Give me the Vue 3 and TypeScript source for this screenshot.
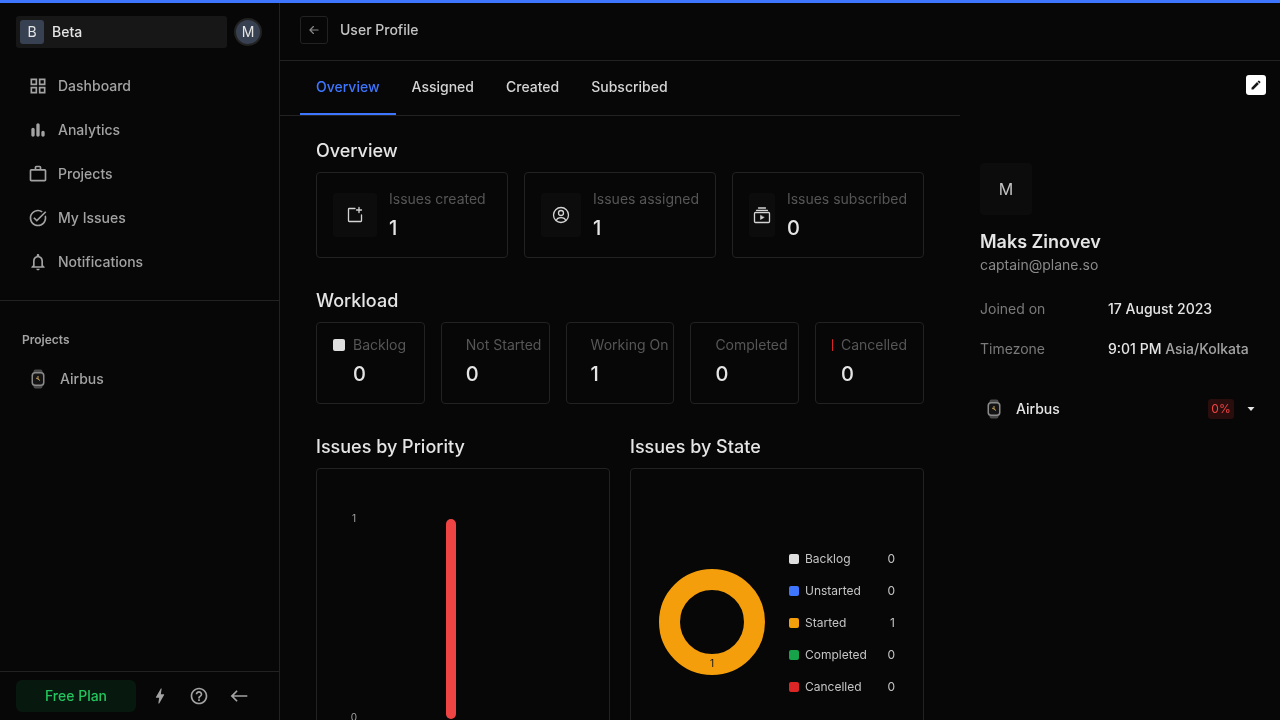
<script setup lang="ts">
const nav = [
  { label: 'Dashboard', d: 'M3 3v8h8V3H3zm6 6H5V5h4v4zm-6 4v8h8v-8H3zm6 6H5v-4h4v4zm4-16v8h8V3h-8zm6 6h-4V5h4v4zm-6 4v8h8v-8h-8zm6 6h-4v-4h4v4z' },
  { label: 'Analytics', d: 'M6 9.2c1.1 0 2 .9 2 2V18c0 1.1-.9 2-2 2s-2-.9-2-2v-6.8c0-1.1.9-2 2-2zM12 4c1.1 0 2 .9 2 2v12c0 1.1-.9 2-2 2s-2-.9-2-2V6c0-1.100.9-2 2-2zm6 9c1.1 0 2 .9 2 2v3c0 1.1-.9 2-2 2s-2-.9-2-2v-3c0-1.100.9-2 2-2z' },
  { label: 'Projects', d: 'M14 6V4h-4v2h4zM4 8v11h16V8H4zm16-2c1.110 0 2 .89 2 2v11c0 1.110-.89 2-2 2H4c-1.110 0-2-.89-2-2l.01-11c0-1.110.88-2 1.990-2h4V4c0-1.110.89-2 2-2h4c1.110 0 2 .89 2 2v2h4z' },
  { label: 'My Issues', d: 'M22 5.180 10.590 16.600l-4.240-4.240 1.410-1.410 2.830 2.830 10-10L22 5.180zm-2.210 5.040c.13.57.21 1.170.21 1.780 0 4.420-3.580 8-8 8s-8-3.580-8-8 3.580-8 8-8c1.580 0 3.040.46 4.280 1.250l1.440-1.440A9.900 9.900 0 0 0 12 2C6.480 2 2 6.480 2 12s4.480 10 10 10 10-4.480 10-10c0-1.190-.22-2.330-.6-3.390l-1.610 1.610z' },
  { label: 'Notifications', d: 'M12 22c1.100 0 2-.9 2-2h-4c0 1.100.9 2 2 2zm6-6v-5c0-3.070-1.630-5.640-4.500-6.320V4c0-.83-.67-1.500-1.500-1.500s-1.500.67-1.500 1.500v.68C7.640 5.360 6 7.920 6 11v5l-2 2v1h16v-1l-2-2zm-2 1H8v-6c0-2.480 1.510-4.500 4-4.500s4 2.020 4 4.500v6z' }
]

const tabs = ['Overview', 'Assigned', 'Created', 'Subscribed']

const overview = [
  { label: 'Issues created', value: 1, icon: 'created' },
  { label: 'Issues assigned', value: 1, icon: 'assigned' },
  { label: 'Issues subscribed', value: 0, icon: 'subscribed' }
]

const workload = [
  { label: 'Backlog', value: 0, color: '#dedede' },
  { label: 'Not Started', value: 0, color: '#3f76ff' },
  { label: 'Working On', value: 1, color: '#f59e0b' },
  { label: 'Completed', value: 0, color: '#16a34a' },
  { label: 'Cancelled', value: 0, color: '#dc2626' }
]

const legend = [
  { label: 'Backlog', value: 0, color: '#dedede' },
  { label: 'Unstarted', value: 0, color: '#3f76ff' },
  { label: 'Started', value: 1, color: '#f59e0b' },
  { label: 'Completed', value: 0, color: '#16a34a' },
  { label: 'Cancelled', value: 0, color: '#dc2626' }
]
</script>

<template>
  <div class="page">
    <div class="topbar"></div>
    <div class="shell">
      <aside class="sidebar">
        <div class="side-head">
          <div class="workspace">
            <span class="ws-logo">B</span>
            <span class="ws-name">Beta</span>
          </div>
          <span class="user-dot">M</span>
        </div>
        <nav class="nav">
          <div v-for="item in nav" :key="item.label" class="nav-item">
            <svg class="nav-icon" viewBox="0 0 24 24" width="20" height="20"><path :d="item.d" /></svg>
            <span>{{ item.label }}</span>
          </div>
        </nav>
        <div class="side-projects">
          <div class="side-label">Projects</div>
          <div class="side-project">
            <svg class="watch" viewBox="0 0 16 20" width="16" height="20">
              <rect x="3.500" y="0.500" width="9" height="19" rx="2" fill="#4a4a4a" />
              <rect x="1.500" y="3" width="13" height="14" rx="3.500" fill="#8a8a8a" />
              <rect x="3" y="4.500" width="10" height="11" rx="2.200" fill="#141414" />
              <path d="M8 7v3l2 1.500M8 10l-2-1" stroke="#c9a25a" stroke-width="1" fill="none" />
            </svg>
            <span>Airbus</span>
          </div>
        </div>
        <div class="side-foot">
          <div class="plan">Free Plan</div>
          <svg class="foot-icon bolt" viewBox="0 0 24 24" width="20" height="20"><path d="M11 21h-1l1-7H7.500c-.58 0-.57-.32-.38-.66.19-.34.05-.08.07-.12C8.480 10.940 10.420 7.540 13 3h1l-1 7h3.500c.49 0 .56.33.47.51l-.07.15C12.960 17.550 11 21 11 21z" /></svg>
          <svg class="foot-icon help" viewBox="0 0 24 24" width="20" height="20"><path d="M11 18h2v-2h-2v2zm1-16C6.480 2 2 6.480 2 12s4.480 10 10 10 10-4.480 10-10S17.520 2 12 2zm0 18c-4.410 0-8-3.590-8-8s3.590-8 8-8 8 3.590 8 8-3.590 8-8 8zm0-14c-2.210 0-4 1.790-4 4h2c0-1.100.9-2 2-2s2 .9 2 2c0 2-3 1.750-3 5h2c0-2.250 3-2.500 3-5 0-2.210-1.790-4-4-4z" /></svg>
          <svg class="foot-icon back" viewBox="0 0 24 24" width="20" height="20"><path d="M9 19l1.410-1.410L5.830 13H22v-2H5.830l4.590-4.590L9 5l-7 7 7 7z" /></svg>
        </div>
      </aside>

      <main class="main">
        <header class="header">
          <button class="back-btn">
            <svg viewBox="0 0 24 24" width="14" height="14" fill="none" stroke="#8a8a8a" stroke-width="2" stroke-linecap="round" stroke-linejoin="round"><path d="M19 12H5M11 6l-6 6 6 6" /></svg>
          </button>
          <span class="header-title">User Profile</span>
        </header>

        <div class="body">
          <div class="left">
            <div class="tabs">
              <div v-for="(t, i) in tabs" :key="t" class="tab" :class="{ active: i === 0 }">{{ t }}</div>
            </div>
            <div class="content">
              <h2 class="title">Overview</h2>
              <div class="overview-grid">
                <div v-for="c in overview" :key="c.label" class="card ov-card">
                  <div class="ov-icon">
                    <svg v-if="c.icon === 'created'" viewBox="0 0 20 20" width="20" height="20" fill="none" stroke="#d4d4d4" stroke-width="1.300" stroke-linecap="round" stroke-linejoin="round">
                      <path d="M10 3.500H4.200a.7.7 0 0 0-.7.7v11.600a.7.7 0 0 0 .7.7h11.600a.7.7 0 0 0 .7-.7V10" />
                      <path d="M14 2.500v5M11.500 5h5" />
                    </svg>
                    <svg v-else-if="c.icon === 'assigned'" viewBox="0 0 20 20" width="20" height="20" fill="none" stroke="#d4d4d4" stroke-width="1.300" stroke-linecap="round" stroke-linejoin="round">
                      <circle cx="10" cy="10" r="7.500" />
                      <circle cx="10" cy="8" r="2.500" />
                      <path d="M5.200 15.600c.6-2 2.600-3 4.800-3s4.200 1 4.800 3" />
                    </svg>
                    <svg v-else viewBox="0 0 20 20" width="20" height="20" fill="none" stroke="#d4d4d4" stroke-width="1.300" stroke-linecap="round" stroke-linejoin="round">
                      <rect x="2.500" y="7.500" width="15" height="10" rx="1" />
                      <path d="M4.500 5.300h11M6.500 3h7" />
                      <path d="M8.500 10.500v4l3.500-2z" fill="#d4d4d4" stroke-width="0.500" />
                    </svg>
                  </div>
                  <div class="ov-text">
                    <div class="ov-label">{{ c.label }}</div>
                    <div class="ov-value">{{ c.value }}</div>
                  </div>
                </div>
              </div>

              <h2 class="title section">Workload</h2>
              <div class="workload-grid">
                <div v-for="w in workload" :key="w.label" class="card wl-card">
                  <span class="wl-dot" :style="{ backgroundColor: w.color }"></span>
                  <span class="wl-label">{{ w.label }}</span>
                  <span class="wl-value">{{ w.value }}</span>
                </div>
              </div>

              <div class="charts">
                <div>
                  <h2 class="title">Issues by Priority</h2>
                  <div class="card chart-card">
                    <svg class="bar-chart" width="292" height="320" viewBox="0 0 292 320">
                      <text x="37" y="53" class="tick">1</text>
                      <text x="37" y="252" class="tick">0</text>
                      <rect x="129" y="50" width="10" height="200" rx="5" fill="#ef4444" />
                    </svg>
                  </div>
                </div>
                <div>
                  <h2 class="title">Issues by State</h2>
                  <div class="card chart-card state-card">
                    <svg class="donut" width="106" height="106" viewBox="0 0 106 106">
                      <circle cx="53" cy="53" r="42.500" fill="none" stroke="#f59e0b" stroke-width="21" />
                      <text x="53" y="98" class="donut-label">1</text>
                    </svg>
                    <div class="legend">
                      <div v-for="l in legend" :key="l.label" class="legend-row">
                        <span class="legend-dot" :style="{ backgroundColor: l.color }"></span>
                        <span class="legend-label">{{ l.label }}</span>
                        <span class="legend-value">{{ l.value }}</span>
                      </div>
                    </div>
                  </div>
                </div>
              </div>
            </div>
          </div>

          <section class="profile">
            <button class="edit-btn">
              <svg viewBox="0 0 24 24" width="12" height="12"><path d="M3 17.250V21h3.750L17.810 9.940l-3.750-3.750L3 17.250zM20.710 7.040c.39-.39.39-1.020 0-1.410l-2.340-2.340c-.39-.39-1.020-.39-1.410 0l-1.830 1.830 3.750 3.750 1.830-1.830z" fill="#171717" /></svg>
            </button>
            <div class="avatar">M</div>
            <div class="name">Maks Zinovev</div>
            <div class="email">captain@plane.so</div>
            <div class="info">
              <div class="info-row">
                <span class="info-label">Joined on</span>
                <span class="info-value">17 August 2023</span>
              </div>
              <div class="info-row">
                <span class="info-label">Timezone</span>
                <span class="info-value">9:01 PM <span class="tz">Asia/Kolkata</span></span>
              </div>
            </div>
            <div class="project-row">
              <svg class="watch" viewBox="0 0 16 20" width="16" height="20">
                <rect x="3.500" y="0.500" width="9" height="19" rx="2" fill="#4a4a4a" />
                <rect x="1.500" y="3" width="13" height="14" rx="3.500" fill="#8a8a8a" />
                <rect x="3" y="4.500" width="10" height="11" rx="2.200" fill="#141414" />
                <path d="M8 7v3l2 1.500M8 10l-2-1" stroke="#c9a25a" stroke-width="1" fill="none" />
              </svg>
              <span class="project-name">Airbus</span>
              <span class="percent">0%</span>
              <svg class="caret" viewBox="0 0 10 10" width="10" height="10"><path d="M1.500 3h7L5 7z" fill="#e5e5e5" /></svg>
            </div>
          </section>
        </div>
      </main>
    </div>
  </div>
</template>

<style>
html, body {
  margin: 0;
  background: #070707;
}
</style>

<style scoped>
.page {
  width: 1280px;
  height: 720px;
  overflow: hidden;
  background: #070707;
  color: #e5e5e5;
  font-family: Inter, "Noto Sans", sans-serif;
  font-size: 14px;
  line-height: 20px;
  display: flex;
  flex-direction: column;
}

.topbar {
  height: 3px;
  flex: none;
  background: #3f76ff;
}

/* own layer without a backdrop, so text is greyscale antialiased */
.shell {
  flex: 1;
  min-height: 0;
  display: flex;
  will-change: opacity;
}

.sidebar {
  width: 280px;
  flex: none;
  box-sizing: border-box;
  border-right: 1px solid #222;
  display: flex;
  flex-direction: column;
}

.side-head {
  display: flex;
  align-items: center;
  justify-content: space-between;
  padding: 13px 16px 0;
}

.workspace {
  width: 211px;
  height: 32px;
  box-sizing: border-box;
  padding: 0 4px;
  border-radius: 3px;
  background: #171717;
  display: flex;
  align-items: center;
  gap: 8px;
}

.ws-logo {
  width: 24px;
  height: 24px;
  border-radius: 3px;
  background: #374151;
  display: flex;
  align-items: center;
  justify-content: center;
  color: #e5e5e5;
}

.ws-name {
  color: #e5e5e5;
  font-weight: 500;
}

.user-dot {
  width: 24px;
  height: 24px;
  border: 2px solid #222;
  border-radius: 50%;
  background: #374151;
  display: flex;
  align-items: center;
  justify-content: center;
  margin-right: 1px;
  color: #e5e5e5;
}

.nav {
  margin-top: 16px;
  padding-bottom: 16px;
  border-bottom: 1px solid #222;
}

.nav-item {
  height: 44px;
  display: flex;
  align-items: center;
  gap: 10px;
  padding-left: 28px;
  color: #a3a3a3;
  font-weight: 500;
}

.nav-icon {
  fill: #a3a3a3;
}

.side-projects {
  padding: 29px 22px 0;
}

.side-label {
  font-size: 12px;
  font-weight: 600;
  color: #a3a3a3;
}

.side-project {
  margin-top: 19px;
  padding-left: 8px;
  display: flex;
  align-items: center;
  gap: 14px;
  color: #a3a3a3;
  font-weight: 500;
}

.side-foot {
  margin-top: auto;
  height: 48px;
  border-top: 1px solid #222;
  padding: 0 16px;
  display: flex;
  align-items: center;
}

.plan {
  width: 120px;
  height: 32px;
  border-radius: 6px;
  background: #07190f;
  color: #22c55e;
  font-weight: 500;
  display: flex;
  align-items: center;
  justify-content: center;
}

.foot-icon {
  fill: #a3a3a3;
  flex: none;
}

.bolt {
  margin-left: 14px;
}

.help {
  margin-left: 19px;
}

.back {
  margin-left: 20px;
}

.main {
  flex: 1;
  min-width: 0;
  display: flex;
  flex-direction: column;
}

.header {
  height: 58px;
  flex: none;
  box-sizing: border-box;
  border-bottom: 1px solid #222;
  padding: 0 20px 3px;
  display: flex;
  align-items: center;
  gap: 12px;
}

.back-btn {
  width: 28px;
  height: 28px;
  padding: 0;
  background: none;
  border: 1px solid #222;
  border-radius: 3px;
  display: flex;
  align-items: center;
  justify-content: center;
}

.header-title {
  color: #c4c4c4;
  font-weight: 500;
}

.body {
  flex: 1;
  min-height: 0;
  display: flex;
}

.left {
  width: 680px;
  flex: none;
}

.tabs {
  height: 55px;
  box-sizing: border-box;
  border-bottom: 1px solid #222;
  padding: 0 20px;
  display: flex;
}

.tab {
  padding: 0 16px 2px;
  height: 54px;
  box-sizing: border-box;
  display: flex;
  align-items: center;
  color: #d4d4d4;
  font-weight: 500;
}

.tab.active {
  color: #3f76ff;
  padding-bottom: 0;
  border-bottom: 2px solid #3f76ff;
}

.content {
  padding: 20px 36px 0;
}

.title {
  margin: 0 0 7px;
  padding-top: 1px;
  font-size: 18px;
  line-height: 28px;
  font-weight: 500;
  color: #e5e5e5;
}

.section {
  margin-top: 28px;
}

.card {
  border: 1px solid #222;
  border-radius: 4px;
  box-sizing: border-box;
}

.overview-grid {
  display: grid;
  grid-template-columns: repeat(3, minmax(0, 1fr));
  gap: 16px;
}

.ov-card {
  padding: 16px;
  display: flex;
  align-items: center;
  gap: 12px;
  height: 86px;
}

.ov-icon {
  width: 44px;
  height: 44px;
  border-radius: 3px;
  background: #0c0c0c;
  display: flex;
  align-items: center;
  justify-content: center;
}

.ov-icon svg {
  flex: none;
}

.ov-text {
  flex: none;
  align-self: flex-start;
}

.ov-label {
  color: #565656;
  white-space: nowrap;
}

.ov-value {
  margin-top: 5px;
  font-size: 20px;
  line-height: 28px;
  font-weight: 500;
}

.workload-grid {
  display: grid;
  grid-template-columns: repeat(5, minmax(0, 1fr));
  gap: 16px;
}

/* the dot column gives way when the label needs the room */
.wl-card {
  height: 82px;
  padding: 12px 16px;
  display: grid;
  grid-template-columns: minmax(0, 12px) max-content;
  grid-template-rows: 20px 28px;
  column-gap: 8px;
  row-gap: 5px;
  align-content: start;
}

.wl-dot {
  height: 12px;
  border-radius: 2px;
  align-self: center;
}

.wl-label {
  color: #565656;
  white-space: nowrap;
}

.wl-value {
  grid-column: 2;
  font-size: 20px;
  line-height: 28px;
  font-weight: 500;
}

.charts {
  margin-top: 28px;
  display: grid;
  grid-template-columns: 1fr 1fr;
  gap: 20px;
}

.chart-card {
  height: 320px;
}

.bar-chart {
  display: block;
}

.tick {
  font-size: 10px;
  fill: #a3a3a3;
  text-anchor: middle;
}

.state-card {
  padding: 0 0 12px 28px;
  display: flex;
  align-items: center;
  gap: 24px;
}

.donut {
  flex: none;
}

.donut-label {
  font-size: 10px;
  fill: #111;
  text-anchor: middle;
}

.legend {
  width: 106px;
  margin-top: 2px;
  display: flex;
  flex-direction: column;
  gap: 16px;
}

.legend-row {
  height: 16px;
  display: flex;
  align-items: center;
  font-size: 12px;
  line-height: 16px;
  color: #c4c4c4;
}

.legend-dot {
  width: 10px;
  height: 10px;
  border-radius: 2px;
  margin-right: 6px;
}

.legend-value {
  margin-left: auto;
}

.profile {
  flex: 1;
  position: relative;
  padding: 102px 20px 0;
}

.edit-btn {
  position: absolute;
  top: 14px;
  right: 14px;
  width: 20px;
  height: 20px;
  padding: 0;
  border: 0;
  border-radius: 3px;
  background: #fff;
  display: flex;
  align-items: center;
  justify-content: center;
}

.avatar {
  width: 52px;
  height: 52px;
  border-radius: 4px;
  background: #0c0c0c;
  color: #c4c4c4;
  font-size: 16px;
  display: flex;
  align-items: center;
  justify-content: center;
}

.name {
  margin-top: 13px;
  font-size: 18px;
  line-height: 28px;
  font-weight: 600;
  color: #e5e5e5;
}

.email {
  margin-top: -1px;
  color: #8a8a8a;
}

.info {
  margin-top: 24px;
  display: flex;
  flex-direction: column;
  gap: 20px;
}

.info-row {
  display: flex;
}

.info-label {
  width: 128px;
  color: #7a7a7a;
}

.info-value {
  color: #e5e5e5;
  font-weight: 500;
}

.tz {
  color: #a3a3a3;
}

.project-row {
  margin-top: 40px;
  padding-left: 6px;
  height: 20px;
  display: flex;
  align-items: center;
  gap: 14px;
  color: #e5e5e5;
  font-weight: 500;
}

.project-name {
  flex: 1;
}

.percent {
  width: 26px;
  height: 20px;
  border-radius: 3px;
  background: #2a0d0d;
  color: #ef4444;
  font-size: 12px;
  font-weight: 400;
  display: flex;
  align-items: center;
  justify-content: center;
}

.caret {
  margin-left: -2px;
  margin-right: 4px;
}
</style>
